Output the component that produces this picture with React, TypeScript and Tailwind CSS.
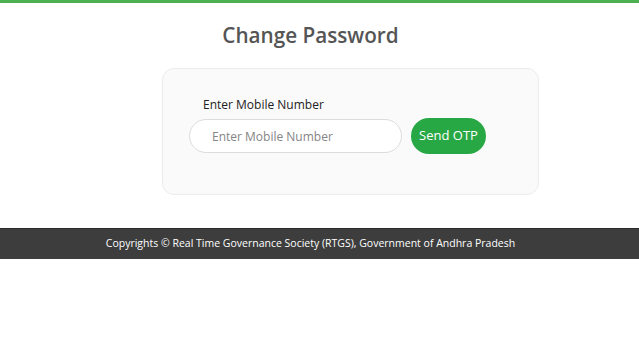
export default function App() {
  return (
    <div className="min-h-[338px] bg-white font-['Open_Sans',sans-serif]">
      <div className="border-t-[3px] border-[#4caf50]" />
      <h2 className="pt-[18px] text-center text-[20.7px] leading-[28px] font-semibold text-[#555555] pr-[18px]">
        Change Password
      </h2>
      <div className="mt-[19px] ml-[162px] w-[377px] h-[127px] rounded-[12px] border border-[#ececec] bg-[#fafafa] pt-[27px] pl-[26px]">
        <label className="block ml-[14px] text-[12px] leading-[18px] font-medium text-[#222222]">
          Enter Mobile Number
        </label>
        <div className="mt-[4px] flex items-center gap-[9px]">
          <input
            type="text"
            placeholder="Enter Mobile Number"
            className="w-[213px] h-[34px] rounded-full border border-[#dddddd] bg-white pl-[22px] text-[12px] text-[#333] placeholder:text-[#858585] outline-none"
          />
          <button className="h-[36px] w-[75px] rounded-full bg-[#28a745] text-[13px] text-white">
            Send OTP
          </button>
        </div>
      </div>
      <footer className="mt-[33px] h-[31px] bg-[#3d3d3d] border-t border-[#2a2a2a] flex items-center justify-center pr-[18px]">
        <p className="text-[10.5px] text-white">
          Copyrights © Real Time Governance Society (RTGS), Government of Andhra Pradesh
        </p>
      </footer>
    </div>
  )
}
